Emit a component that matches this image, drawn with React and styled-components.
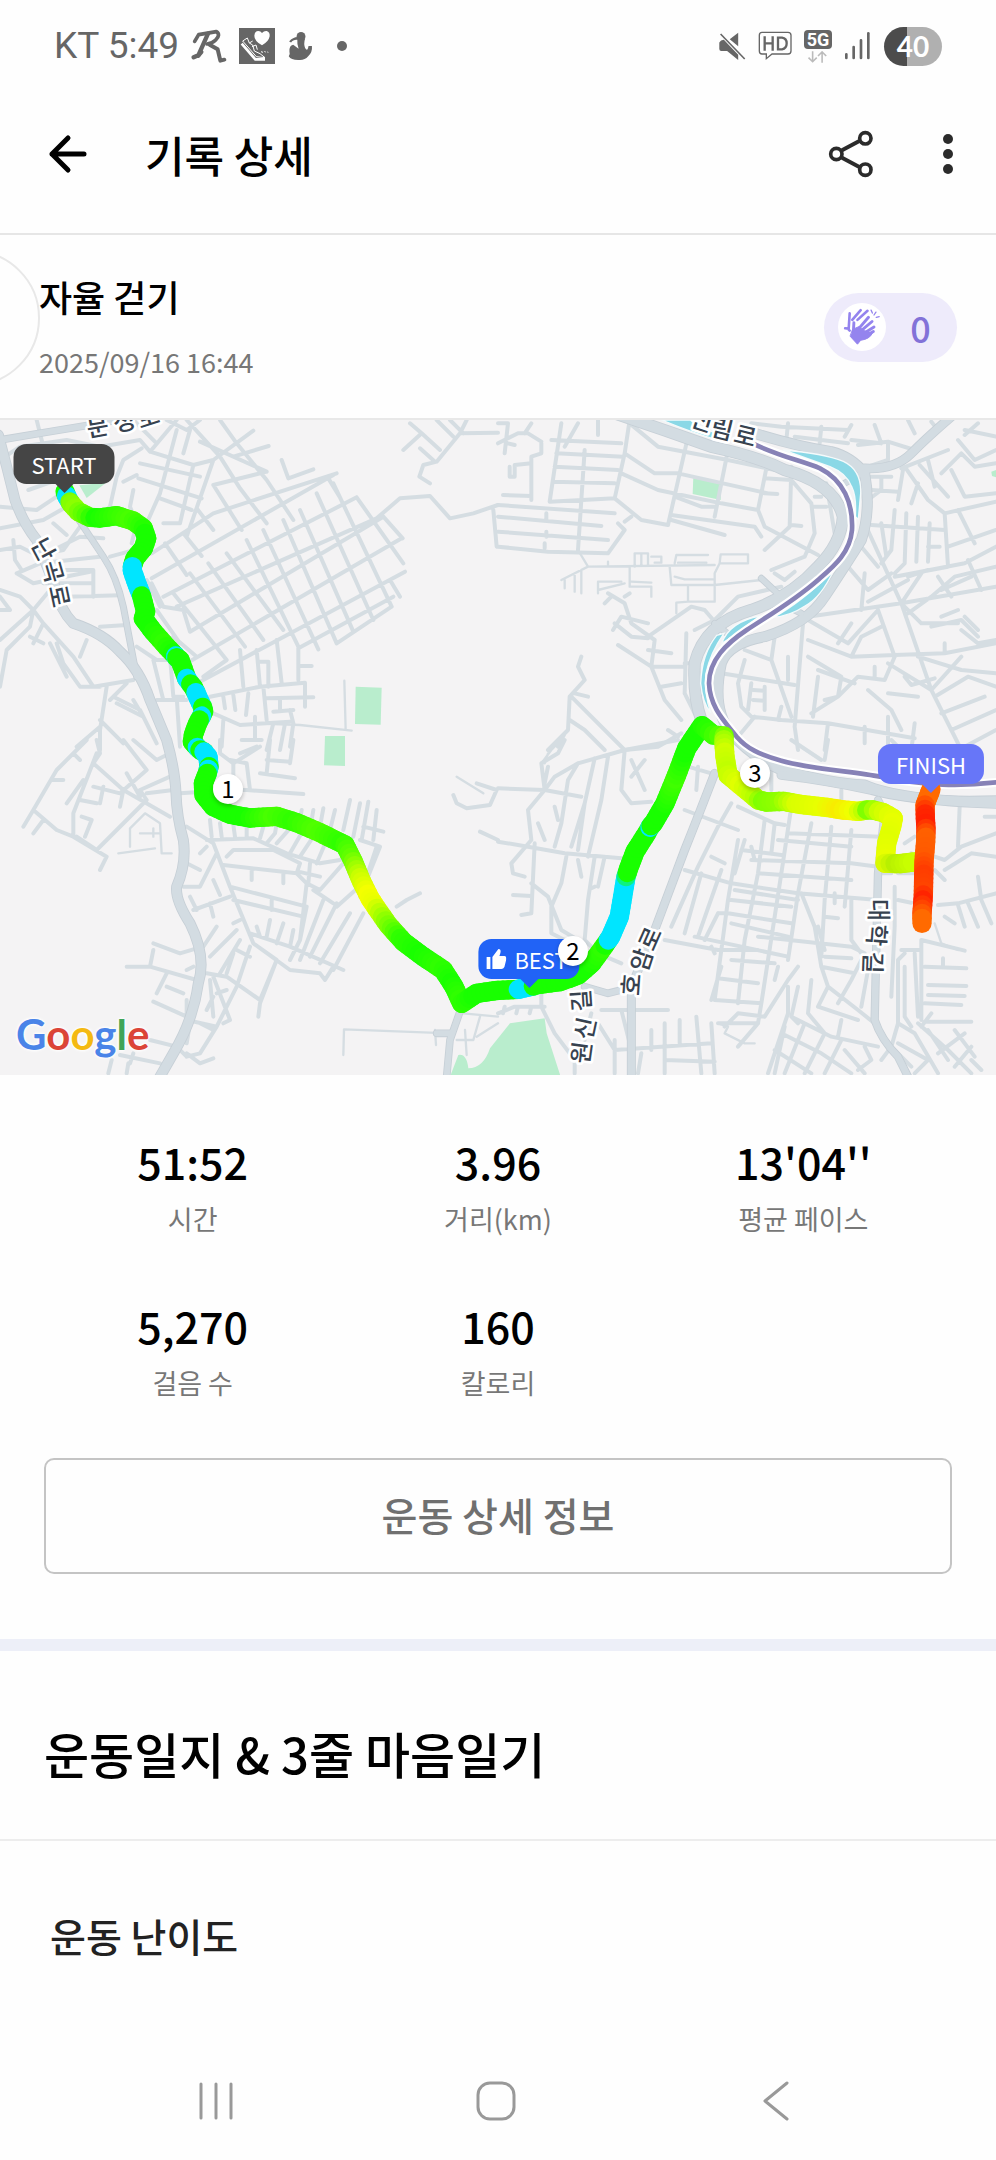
import React from "react"
import styled, { createGlobalStyle } from "styled-components"

/* ---------- map data (map units, 3 per pixel at full width) ---------- */

const MAP_W = 2988
const MAP_H = 1965

const minorRoads = [
  {
    x: 0,
    y: -30,
    d: `M110 30L130 110L185 170 M400 30L470 100 M500 30L560 60L600 30 M0 150L60 110L200 90L300 110L420 90L450 125L580 165L640 150L760 62
    M560 30L660 140L720 235L800 340 M660 30L710 100L800 210L880 330 M600 95L800 185 M420 160L600 200 M415 205L605 265 M450 125L530 30 M530 60L480 250L440 340
    M570 60L550 130 M580 165L540 340L490 340 M480 265L575 300 M640 150L560 380 M700 140L806 108 M640 225L800 185 M640 225L725 360 M590 295L640 360
    M425 115L370 150L350 200L330 290L280 340 M410 195L370 215 M400 240L390 290L410 340L395 400 M85 240L170 210 M0 290L110 300L170 260 M0 355L130 330L200 290
    M845 150L865 205L940 178 M455 430L640 310L1010 190 M455 505L1000 195 M490 560L1070 262 M530 590L1130 325 M570 665L1150 320 M560 760L1205 385
    M600 815L1215 485 M1010 700L1175 590 M895 715L1180 560
    M495 400L560 495 M550 370L605 438 M520 550L680 750 M455 520L490 590 M570 490L735 710 M625 460L790 690 M680 430L850 660 M740 390L895 710 M790 360L955 718
    M850 330L1010 700 M900 300L1060 665 M950 250L1120 630 M1000 220L1175 590 M1070 262L1210 460 M1150 320L1208 385 M985 205L1020 262 M1170 510L1200 560
    M490 590L550 600L570 665 M440 510L480 590 M470 600L540 700 M520 680L590 740 M1130 325L1200 265L1290 258L1350 325L1420 310L1494 285 M1480 300L1490 410
    M330 440L440 410 M0 420L60 410L120 440L240 380L310 385 M40 390L45 450L65 480 M160 340L200 375 M240 350L190 420L140 430 M50 490L120 460L300 440 M50 490L100 520L270 485
    M180 480L280 480L280 560 M130 520L280 520 M200 560L360 556 M0 540L60 560L100 600L0 690 M100 600L90 650L20 720L0 830 M150 540L100 600L130 640L220 740L280 830L400 810
    M300 650L380 645 M260 690L240 740 M90 680L130 700 M130 640L100 700 M170 700L190 760L240 830L300 830 M150 700L200 800 M410 710L470 750L530 750
    M460 750L490 870 M510 740L520 860L550 860 M470 870L560 870 M530 860L540 1010 M320 830L300 960L300 1020 M340 860L420 900L470 1000 M380 820L330 870 M350 880L430 920L400 870
    M300 930L370 1000 M230 1010L300 950 M680 750L610 800 M720 720L730 830 M770 720L780 830 M830 690L845 820 M895 715L895 810 M895 768L935 768 M780 755L805 755L805 830
    M630 860L780 830L915 818L915 890 M800 865L940 862 M670 860L675 895 M700 855L706 900 M745 850L738 915 M790 830L800 930 M820 905L880 900 M840 870L840 900
    M640 910L720 945L870 935 M670 930L665 1010 M765 920L765 990 M725 990L785 990 M820 940L800 1020 M855 940L840 1020 M880 940L870 1010 M870 900L880 940
    M1230 40L1265 70L1210 120 M1265 70L1320 120 M1310 30L1360 80 M1400 30L1380 70L1310 155L1270 165L1258 200L1290 220 M1350 30L1390 70 M1260 115L1305 155 M1380 70L1494 68
    M0 600L30 600 M0 560L30 600`,
  },
  {
    x: 1494,
    y: -30,
    d: `M0 40L30 40L20 130 M30 100L50 105 M130 100L130 130L100 140L100 270 M0 100L60 70L90 70L130 95 M190 40L155 275 M100 40L80 70 M35 170L35 200L50 200L50 165L100 160 M15 255L100 258
    M160 90L370 100 M175 130L375 140 M170 170L360 180 M165 215L350 220 M240 40L200 110 M300 30L300 75 M155 275L350 265 M0 285L350 310 M0 320L310 348 M0 365L330 390
    M0 410L150 425L330 430L380 360L360 340 M260 120L240 420 M350 265L380 130L395 30 M145 310L145 330 M145 365L145 380 M140 400L140 415
    M395 40L480 110L690 150L830 180 M380 130L470 190L540 190L810 250 M370 190L480 240L670 280L780 300 M350 265L430 330L510 345 M400 320L380 335
    M570 80L510 345 M690 120L650 320 M810 150L780 300L800 350 M530 260L610 290L650 290 M520 315L770 350L790 380 M520 330L680 375 M800 205L880 210L940 280L950 370L920 440L820 480
    M880 170L875 350L800 420 M800 250L838 252 M880 345L910 348 M800 350L960 435 M945 290L985 290 M950 260L970 260 M985 220L1010 370 M870 40L865 90 M970 50L965 100 M1060 90L1150 100
    M760 40L850 50L1050 60 M1060 45L1040 80 M1130 45L1150 100 M890 80L1050 100 M830 490L860 510L890 485 M880 525L890 550
    M1230 30L1250 70 M1300 35L1320 60 M1080 105L1170 95L1250 120 M1170 100L1170 150L1110 170 M1220 170L1290 270L1340 310L1350 470L1190 500 M1210 175L1350 120 M1265 165L1350 260 M1290 150L1310 230
    M1360 180L1400 260L1494 250 M1330 190L1390 130L1430 170L1494 160 M1380 90L1430 150L1494 120 M1400 60L1494 80 M1440 40L1400 75 M1340 310L1494 275 M1380 300L1430 400 M1350 410L1494 360
    M1120 200L1180 200 M1150 200L1150 240L1110 270 M1215 180L1200 270 M1120 240L1200 245 M1260 220L1240 280 M1120 345L1340 360 M1190 300L1180 420L1150 460 M1225 310L1220 460L1190 490 M1260 320L1255 455 M1295 340L1290 455 M1290 410L1325 410
    M1100 340L1210 580L1300 840L1390 1020 M1090 410L1140 470 M1050 470L1110 540L1180 490 M1150 340L1165 440 M1100 490L1090 600 M1110 575L1230 510 M930 620L1210 580L1494 530
    M1190 500L1400 460L1494 410 M1270 490L1210 580 M1320 500L1360 560 M1330 540L1420 500 M1410 450L1450 540 M1230 610L1300 560L1370 500L1494 470 M1140 600L1190 740 M1210 580L1270 640L1380 640 M1330 620L1380 600
    M930 630L1050 700L1140 600 M930 690L1060 740L1090 680L1150 650 M1020 700L1060 640 M930 740L1030 800L1020 860L940 910 M915 640L890 950 M960 800L945 920 M1060 740L1190 735L1340 730L1494 700
    M1190 740L1160 810L1080 800L1020 860L980 870 M1130 770L1130 800 M1260 740L1390 780L1494 790 M1340 700L1340 730 M1390 740L1300 840L1170 760 M1220 800L1240 825L1310 805 M1170 850L1260 860 M1110 840L1180 900L1210 960
    M1310 860L1410 800L1494 830 M1330 910L1460 860 M1360 960L1494 900 M1400 1010L1494 960 M1390 660L1440 700L1494 690 M1400 620L1440 660 M1300 650L1390 630L1440 680 M1230 500L1290 480
    M670 790L890 825 M740 720L820 750 M830 680L820 750L880 920 M740 750L720 820L730 890L760 920L850 930L990 940L1250 985 M760 820L750 900 M800 830L800 900 M765 840L800 842 M765 870L800 872 M850 890L840 930 M870 740L870 810
    M890 950L900 1020 M990 940L980 1020 M1100 950L1100 1000 M1170 920L1170 1010 M1250 940L1240 1020 M960 780L1070 820 M720 980L770 920
    M590 660L650 630L720 560L850 530 M450 680L580 590L620 600L680 670 M470 690L460 770L560 770 M450 720L520 730 M565 670L560 850 M360 705L460 770L500 870L550 930 M490 830L550 820 M560 850L590 910
    M330 550L380 580L400 640L470 690 M380 560L395 550 M320 580L340 560 M345 660L370 620L450 640 M350 640L400 680L450 685 M560 760L600 760 M510 960L540 980
    M250 740L240 770L260 810L215 860L210 960L150 1020 M230 850L270 860 M220 860L380 1020 M215 930L260 960L320 1020 M380 1020L480 1010L550 970 M200 970L180 1010`,
  },
  {
    x: 0,
    y: 960,
    d: `M290 0L300 40L280 70L370 150L510 230 M370 0L440 90 M400 0L470 60L510 40 M290 40L220 220L220 290 M260 0L170 90L100 210L70 260 M100 210L170 270L220 290L320 350L300 390 M220 40L240 60 M100 280L130 240 M160 120L190 120
    M280 140L360 160L440 90 M300 190L310 140 M240 180L290 190 M245 230L275 240L255 290 M370 150L360 200 M230 290L290 330L440 180L420 150L510 110 M380 100L420 170 M520 150L440 160 M540 160L610 155 M250 120L200 190
    M560 260L640 310L690 440L760 610L870 690L960 700L975 720L1000 680 M630 240L635 290 M660 250L665 290 M700 255L705 290 M740 260L740 290 M790 260L780 295 M620 300L760 295L860 340L960 370L1020 360 M830 250L825 280L800 310 M870 265L830 310 M910 270L870 340 M940 290L900 350 M980 300L950 370
    M600 340L620 320 M680 350L700 330L820 330L900 370L890 400L920 430 M650 340L600 440L550 440 M670 375L890 400 M755 385L755 420 M850 400L850 430 M930 370L925 430 M895 395L960 410 M690 440L920 500 M700 480L910 530 M815 480L815 510 M580 510L690 470 M640 420L660 465 M570 470L590 510
    M560 370L600 390 M610 620L650 560 M630 490L640 530 M630 650L710 570 M660 700L720 600 M750 580L870 620L1030 690 M780 590L770 560 M810 540L800 590 M850 550L830 610 M880 570L870 620 M720 540L700 550 M920 500L900 600L870 660 M940 450L1000 490 M970 480L900 660 M1010 490L930 650 M1050 520L960 670 M1090 520L1000 690
    M1030 370L960 450L920 430L900 600 M1100 420L1010 500 M1130 320L1080 470 M1050 180L1030 270 M1080 190L1060 290 M1105 185L1085 300 M1130 210L1120 300 M1090 260L1150 275 M1080 300L1140 320L1100 420 M1005 210L990 270 M970 205L960 260 M940 210L935 240 M905 210L900 240
    M690 60L740 70L750 150L730 150 M660 0L660 40L700 70L780 20 M780 100L885 115 M740 150L910 162 M810 0L800 100 M880 0L870 70 M800 60L870 65 M700 70L700 150 M720 40L770 20
    M1190 500L1220 480L1260 460 M460 610L540 640L590 625 M460 630L450 680 M380 680L450 680L590 720 M500 700L470 760 M500 740L550 760 M460 785L560 830L560 780 M450 900L530 920L560 950 M360 945L480 970 M335 960L325 1000 M385 970L380 1000 M400 940L390 970
    M620 700L680 710L780 780L830 660 M630 720L640 830 M640 710L690 840L670 850 M650 760L680 750 M640 770L620 810 M750 620L710 740L650 860L560 840 M760 610L830 660L780 790L775 830 M710 630L750 650 M700 640L680 700 M570 850L560 910 M650 860L600 940L560 950 M560 940L600 970L640 955 M600 850L640 870 M560 690L580 680
    M1360 165L1370 190L1400 205L1470 195L1490 150L1430 130 M1440 275L1494 300`,
  },
  {
    x: 1494,
    y: 960,
    d: `M0 145L140 150L170 110L240 70L380 30L540 0 M140 150L130 70L180 40L200 0 M140 150L250 170 M150 80L140 130 M380 30L370 150L400 190L460 185 M400 60L440 150 M440 60L400 110 M140 150L90 210L100 300L40 370L45 400L80 410 M0 305L90 320L200 340L370 355
    M240 70L210 120L190 250L170 320 M290 55L260 190L240 330 M330 50L310 180L270 350 M260 190L220 320 M120 250L140 300 M170 200L180 240 M205 350L190 430L160 500L160 580L200 600 M240 360L250 410 M290 350L270 480L260 600L300 640 M320 350L300 440
    M110 310L100 520L70 525 M45 465L100 468 M100 430L150 470L190 570L240 600 M300 640L370 670 M290 440L280 445
    M0 820L50 800L140 800 M130 740L130 800L170 880L230 960 M20 800L15 820 M60 800L55 820 M100 800L95 820 M560 210L720 270 M600 80L595 150 M570 80L640 100 M700 190L660 260L600 380L520 560 M720 200L830 250L860 255
    M640 350L680 370 M720 300L690 480L650 780L790 790L780 850 M800 240L780 400L740 600L720 790 M560 390L700 430 M670 390L600 590 M610 400L560 580 M740 300L710 400 M880 200L850 400L790 790 M940 250L900 460L870 660
    M1000 260L980 480L970 650 M1060 270L1040 500 M870 280L1150 290 M840 300L1060 320 M730 330L850 345 M760 360L1060 370L1140 380 M780 400L1060 420 M700 430L900 460L1140 480 M830 250L820 340 M760 320L770 360 M710 450L900 480 M700 480L880 500 M690 520L880 550 M700 550L870 590
    M660 520L690 520 M660 520L620 600 M590 590L870 650 M500 600L660 630L780 630 M640 620L650 640 M780 590L1060 620L1100 640 M700 660L830 670 M670 680L640 780 M660 715L780 730 M910 460L950 560L970 680L990 740L960 800 M970 680L1070 700 M980 650L1060 655 M980 630L960 560
    M1010 460L1010 490 M980 530L1020 535 M1060 480L1060 600L1090 640 M840 680L830 720 M900 680L870 720L800 830L720 820L680 860 M870 740L870 820L810 1000 M900 740L880 830L900 850 M940 720L930 820L980 880 M990 740L1080 810L1130 850 M1100 640L1060 720L1020 790 M1110 690L1090 800 M960 800L1080 840
    M880 830L1000 890L1140 920 M850 880L970 940L1060 1000 M830 930L940 1000 M920 850L860 1000 M980 880L920 1000 M1030 900L980 1000 M860 860L830 1000 M1100 920L1120 960L1080 990 M1030 840L1020 890
    M1190 440L1190 560L1180 770 M1220 640L1200 660L1200 850L1250 880L1320 1000 M1210 630L1270 630 M1220 680L1220 830L1240 860 M1250 640L1260 830 M1270 600L1400 632 M1280 680L1405 685 M1335 655L1335 680 M1290 735L1405 738 M1290 765L1400 768 M1280 790L1390 795
    M1280 845L1420 845 M1260 850L1350 930L1420 1000 M1300 820L1270 860 M1320 940L1400 880 M1200 910L1290 960L1250 1000 M1200 850L1180 920L1150 960 M1290 870L1350 960 M1370 870L1430 950 M1420 920L1370 980 M1180 920L1240 980 M1420 960L1450 990
    M1200 400L1250 400L1240 340 M1310 350L1340 360L1390 320L1494 280 M1385 200L1380 320 M1340 390L1420 340L1494 350 M1320 495L1380 490L1494 460 M1380 495L1400 560 M1340 530L1370 550 M1440 410L1450 480L1480 550 M1410 490L1440 560 M1140 400L1180 400 M1310 390L1340 420 M1200 480L1240 488
    M1220 310L1250 290 M1460 230L1494 230 M1270 600L1270 840 M1030 150L1030 200 M820 90L820 150 M990 0L980 60 M880 0L970 60 M1180 0L1200 20 M350 930L640 910 M430 940L420 1000 M500 850L500 1000 M545 840L545 910 M595 830L610 1000 M640 850L650 1000 M460 870L460 930 M500 960L650 965
    M310 810L510 810 M280 820L260 900 M350 900L350 1000 M230 960L230 1000 M300 850L350 930 M370 810L400 930 M780 850L720 920 M660 850L780 850 M1040 930L1100 1000`,
  },
]

const thinRoads = [
  { x: 0, y: -30, d: "M1033 812L1037 960 M900 945L1055 962 M760 940L900 945" },
  {
    x: 1494,
    y: -30,
    d: `M240 420L270 470L650 465 M190 510L270 470 M200 510L200 535 M230 490L230 545 M250 480L250 550 M300 550L300 515L370 515 M395 470L395 530L460 530L460 560 M400 515L460 518
    M410 470L410 430L450 430L450 465 M430 430L430 465 M460 440L490 440L490 458L470 458 M530 460L535 435L630 435 M540 458L625 458 M665 458L668 433L750 433L750 460L668 460 M515 470L520 525L650 525L650 490L665 460
    M530 500L560 508L645 508 M570 530L570 575L650 575L650 530 M535 610L535 578L570 575 M650 525L790 510 M300 540L380 520 M330 465L330 455`,
  },
  { x: 0, y: 960, d: "M1030 945L1032 868L1350 880 M1305 870L1308 915 M355 340L465 325 M390 320L390 265L435 220L480 250L485 340L515 340 M420 280L480 280 M460 265L460 290 M1370 110L1450 160 M1390 820L1494 830 M1440 830L1420 900L1370 900 M1395 870L1400 945 M1494 850L1430 890" },
  { x: 1494, y: 960, d: "M130 70L160 30L190 0 M140 70L150 40 M410 810L510 810 M660 850L690 860L680 880L740 910L770 910 M1310 550L1330 610L1380 630" },
]

const arterials = [
  { x: 0, y: -30, w: 20, d: "M0 90L120 70L270 45L400 22" },
  { x: 0, y: -30, w: 30, d: "M-5 75L20 170L45 270Q70 340 110 390L165 530Q180 600 220 640Q310 670 360 725Q420 780 450 870L500 990Q525 1080 528 1150Q530 1220 550 1290Q560 1360 530 1430Q525 1470 570 1540Q620 1640 595 1720Q580 1830 520 1930L480 2000" },
  { x: 0, y: -30, w: 18, d: "M230 320L310 440Q350 500 370 590L410 800" },
  { x: 1494, y: -30, w: 34, d: "M350 10Q500 60 640 110Q780 140 860 180Q1010 220 1035 320Q1030 400 960 470Q880 560 760 600Q620 640 590 760Q585 860 610 930" },
  { x: 1494, y: -30, w: 30, d: "M770 70Q900 110 1000 125Q1060 140 1100 190Q1120 300 1090 390Q1040 470 980 560Q930 640 800 680Q690 700 670 760Q640 900 700 970Q760 1040 850 1080Q1000 1120 1100 1125Q1200 1170 1494 1180" },
  { x: 1494, y: -30, w: 26, d: "M1100 175Q1190 180 1240 130Q1290 80 1360 20" },
  { x: 1494, y: 960, w: 26, d: "M850 105Q980 120 1120 150Q1260 190 1510 180" },
  { x: 1494, y: 960, w: 24, d: "M650 100Q600 230 560 330L470 570L400 740L400 1010" },
  { x: 1494, y: 960, w: 22, d: "M1140 180L1160 220L1140 400L1130 840Q1150 900 1200 950L1230 1010" },
  { x: 1494, y: 960, w: 20, d: "M260 740L330 760L390 745" },
  { x: 0, y: 960, w: 20, d: "M1385 800L1350 900L1340 1010 M1310 880L1350 880" },
  { x: 1494, y: -30, w: 18, d: "M790 505L860 570 M650 640L700 680 M870 590L910 610 M1040 220L1110 180" },
]

const parks = [
  "M1067 800L1145 803L1142 914L1065 912Z",
  "M975 948L1035 948L1035 1038L972 1036Z",
  "M238 196L318 188L260 234Z",
  "M2080 170L2164 186L2162 240L2078 222Z",
  "M2988 150L2974 155L2976 168L2988 172Z",
  "M1350 1970L1375 1905Q1400 1900 1405 1945Q1450 1945 1470 1885L1530 1810L1634 1795L1640 1840L1682 1970Z",
]

const waters = [
  "M1985 0L2070 0Q2120 30 2180 55L2160 62Q2080 40 1985 0Z",
  "M2350 90Q2470 100 2530 124Q2585 150 2582 220L2575 298L2566 290Q2570 230 2555 200Q2540 160 2490 140Q2420 115 2350 90Z",
  "M2500 452Q2465 530 2415 558Q2370 588 2320 592Q2400 550 2500 452Z",
  "M2165 670Q2190 604 2280 588Q2230 625 2185 658Z",
  "M2172 640Q2130 700 2118 760Q2112 820 2132 878Q2108 850 2102 790Q2106 700 2150 646Z",
]

const rail =
  "M2240 62C2330 108 2400 120 2460 145C2530 180 2560 250 2556 330C2550 400 2500 440 2454 480C2380 545 2300 590 2240 630C2180 670 2127 720 2127 790C2130 860 2170 900 2210 950C2240 985 2280 1005 2344 1022C2420 1045 2560 1055 2640 1070C2780 1098 2880 1100 3000 1086"

const G = "#19ff00"
const C = "#00e5ff"
const Y = "#e8ff00"

const walk = [
  [195, 215, G], [200, 228, G], [203, 234, C], [210, 246, C], [214, 252, "#7dfc00"], [235, 275, "#8cff00"], [270, 292, "#50ff00"], [300, 294, G], [350, 287, "#30ff00"],
  [400, 303, "#48ff00"], [430, 325, "#30ff00"], [440, 355, G], [430, 385, G], [405, 415, G], [397, 440, G], [397, 452, C], [412, 495, C], [425, 528, C], [430, 548, G], [437, 575, G], [430, 595, G],
  [460, 635, G], [500, 680, "#30ff00"], [527, 708, G], [530, 713, C], [540, 720, G], [560, 775, G], [572, 792, C], [580, 802, G], [588, 818, G], [594, 832, C], [608, 862, C], [611, 874, G], [605, 888, G], [598, 900, C],
  [592, 912, G], [580, 945, G], [577, 965, G], [592, 982, G], [600, 990, C], [612, 996, G], [624, 1010, C], [627, 1040, C], [625, 1048, G], [622, 1060, C], [618, 1070, G], [610, 1090, G],
  [612, 1125, G], [640, 1160, G], [690, 1183, G], [750, 1194, G], [830, 1189, "#48ff00"], [890, 1208, "#30ff00"], [960, 1238, "#50ff00"], [1035, 1275, "#30ff00"], [1060, 1325, "#60ff00"],
  [1085, 1385, "#c8ff00"], [1110, 1435, "#f4ff00"], [1130, 1465, Y], [1165, 1515, "#90ff00"], [1210, 1565, "#30ff00"], [1270, 1610, G], [1330, 1650, "#30ff00"], [1362, 1700, G], [1385, 1750, "#30ff00"],
  [1430, 1720, G], [1494, 1711, G], [1555, 1708, G], [1562, 1706, C], [1600, 1698, C], [1610, 1694, G], [1680, 1685, G], [1735, 1665, G], [1775, 1630, G], [1815, 1575, "#30ff00"],
  [1825, 1560, G], [1832, 1550, C], [1858, 1490, C], [1868, 1430, C], [1878, 1370, C], [1886, 1345, G], [1905, 1295, G], [1940, 1240, G], [1950, 1222, G], [1953, 1217, C], [1960, 1210, G], [1995, 1150, G], [2030, 1065, "#40ff00"],
  [2060, 985, G], [2106, 917, G], [2140, 945, "#30ff00"], [2172, 948, "#50ff00"], [2172, 970, "#a0ff00"], [2175, 1010, "#d0ff00"],
  [2184, 1065, "#c0ff00"], [2230, 1103, "#e0ff00"], [2275, 1140, "#b8ff00"], [2300, 1146, "#80ff00"], [2350, 1144, "#90ff00"], [2400, 1153, "#d8ff00"], [2480, 1162, Y], [2530, 1170, "#f8ec00"], [2575, 1174, "#f0ff00"],
  [2600, 1170, "#c0ff00"], [2620, 1170, "#80ff00"], [2650, 1178, "#c8ff00"], [2680, 1195, "#e0ff00"], [2675, 1220, "#e8ff00"], [2660, 1270, "#e0ff00"], [2655, 1330, "#e8ff00"], [2700, 1331, "#b8f000"], [2750, 1325, "#c8ff00"],
]

const sprint = [
  [2793, 1108, "#ff6a00"], [2775, 1155, "#ff6a00"], [2776, 1195, "#ff2800"], [2778, 1225, "#ff2000"], [2777, 1265, "#ff6000"], [2772, 1325, "#ff5a00"], [2771, 1375, "#ff3c00"],
  [2770, 1425, "#ff4400"], [2768, 1455, "#ff2400"], [2766, 1480, "#ff4400"], [2766, 1510, "#ff6a00"],
]

const labels = [
  { t: "문", x: 293, y: 20, r: -10 }, { t: "성", x: 372, y: 4, r: -14 }, { t: "로", x: 444, y: -8, r: -18 },
  { t: "난", x: 130, y: 388, r: 62 }, { t: "곡", x: 158, y: 455, r: 74 }, { t: "로", x: 178, y: 528, r: 78 },
  { t: "신", x: 2106, y: 2, r: 18 }, { t: "림", x: 2166, y: 28, r: 14 }, { t: "로", x: 2236, y: 48, r: 14 },
  { t: "호", x: 1894, y: 1694, r: -86 }, { t: "암", x: 1925, y: 1620, r: -72 }, { t: "로", x: 1950, y: 1556, r: -66 },
  { t: "대", x: 2636, y: 1470, r: 90 }, { t: "학", x: 2630, y: 1545, r: 94 }, { t: "길", x: 2618, y: 1628, r: 92 },
  { t: "원", x: 1744, y: 1898, r: -82 }, { t: "신", x: 1756, y: 1825, r: -78 }, { t: "길", x: 1744, y: 1742, r: -94 },
]

const stats = [
  { value: "51:52", label: "시간" },
  { value: "3.96", label: "거리(km)" },
  { value: "13'04''", label: "평균 페이스" },
  { value: "5,270", label: "걸음 수" },
  { value: "160", label: "칼로리" },
]

/* ---------- route ---------- */

const toRgb = (c) => [1, 3, 5].map((i) => parseInt(c.slice(i, i + 2), 16))

// splits each leg into short pieces so the pace colour blends along the line
const pieces = (points) =>
  points.slice(1).flatMap(([x2, y2, c2], i) => {
    const [x1, y1, c1] = points[i]
    const from = toRgb(c1)
    const to = toRgb(c2)
    const n = Math.max(1, Math.round(Math.hypot(x2 - x1, y2 - y1) / 14))
    return Array.from({ length: n }, (_, k) => {
      const at = (a, b, f) => a + (b - a) * f
      const mix = from.map((v, j) => Math.round(at(v, to[j], (k + 1) / n)))
      return {
        d: `M${at(x1, x2, k / n)} ${at(y1, y2, k / n)}L${at(x1, x2, (k + 1) / n)} ${at(y1, y2, (k + 1) / n)}`,
        stroke: `rgb(${mix.join(",")})`,
      }
    })
  })

const Route = ({ points }) => (
  <g fill="none" strokeWidth="58" strokeLinecap="round">
    {pieces(points).map((p, i) => (
      <path key={i} d={p.d} stroke={p.stroke} />
    ))}
  </g>
)

const RoadMap = () => (
  <MapSvg viewBox={`0 0 ${MAP_W} ${MAP_H}`} aria-hidden="true">
    {parks.map((d) => (
      <path key={d} d={d} fill="#b9edcd" />
    ))}
    <g fill="none" stroke="#d5dde2" strokeLinecap="round" strokeLinejoin="round">
      {thinRoads.map((r, i) => (
        <path key={i} d={r.d} transform={`translate(${r.x} ${r.y})`} strokeWidth="7" />
      ))}
      {minorRoads.map((r, i) => (
        <path key={i} d={r.d} transform={`translate(${r.x} ${r.y})`} strokeWidth="12" />
      ))}
      {arterials.map((r, i) => (
        <path key={i} d={r.d} transform={`translate(${r.x} ${r.y})`} stroke="#c6cfd6" strokeWidth={r.w + 3} />
      ))}
      {arterials.map((r, i) => (
        <path key={i} d={r.d} transform={`translate(${r.x} ${r.y})`} stroke="#d3dce2" strokeWidth={r.w - 2} />
      ))}
    </g>
    {waters.map((d) => (
      <path key={d} d={d} fill="#8ad8e6" stroke="#f4fafb" strokeWidth="4" />
    ))}
    <path d={rail} fill="none" stroke="#fff" strokeWidth="27" />
    <path d={rail} fill="none" stroke="#8782b6" strokeWidth="14" />
    <Route points={walk} />
    <Route points={sprint} />
    {labels.map((l, i) => (
      <RoadName key={i} transform={`translate(${l.x} ${l.y}) rotate(${l.r})`} dy="26">
        {l.t}
      </RoadName>
    ))}
  </MapSvg>
)

/* ---------- icons ---------- */

const RunnerIcon = () => (
  <svg width="36" height="38" viewBox="580 85 108 114" fill="none" stroke="#666" strokeLinecap="round" strokeLinejoin="round">
    <path d="M591 128L603 108Q630 104 656 99Q670 108 654 124Q644 134 628 136" strokeWidth="11" />
    <path d="M631 105L610 152L602 170L588 176" strokeWidth="13" />
    <path d="M636 138L660 152L668 186L680 183" strokeWidth="12" />
    <path d="M612 160L602 172" strokeWidth="11" />
  </svg>
)

const ShoeIcon = () => (
  <svg width="36" height="36" viewBox="711 89 108 108">
    <path d="M711 89H819V197H711Z" fill="#666" />
    <path d="M780 141Q757 128 757 112Q758 98 769 98Q776 98 780 104Q786 97 794 98Q804 101 803 114Q800 130 780 141Z" fill="#fff" />
    <path d="M719 136L760 183H789" fill="none" stroke="#fff" strokeWidth="8" />
    <path d="M722 128L736 119L742 134L752 140L757 158L774 166L789 178L763 175Z" fill="none" stroke="#fff" strokeWidth="3" />
    <path d="M742 134L752 128 M750 145L762 140L766 154 M779 158L781 164 M788 158L790 162 M797 160L798 163" fill="none" stroke="#fff" strokeWidth="3" />
  </svg>
)

const SquirrelIcon = () => (
  <svg width="26" height="30" viewBox="856 98 76 88" fill="#666">
    <circle cx="897" cy="114" r="13" />
    <path d="M862 129Q874 114 892 116L888 124Q874 122 868 132Z" />
    <path d="M886 120H909Q904 136 909 148Q916 160 919 142L929 142Q931 160 918 172Q908 184 892 183Q868 184 861 172Q866 168 863 158Q862 140 874 138L890 150Q885 136 886 120Z" />
  </svg>
)

const MuteIcon = () => (
  <svg width="28" height="30" viewBox="664 94 86 90" fill="#666">
    <path d="M700 118L726 98V140Z" />
    <path d="M668 128Q672 120 682 120L726 166V182L692 154H674Q668 154 668 148Z" />
    <path d="M672 102L746 179" stroke="#666" strokeWidth="5" />
  </svg>
)

const HdIcon = () => (
  <svg width="34" height="30" viewBox="788 97 102 90" fill="none" stroke="#666">
    <path d="M800 101H878Q887 101 887 110V157Q887 166 878 166H830L813 180V166H800Q792 166 792 157V110Q792 101 800 101Z" strokeWidth="4" />
    <path d="M808 113V156 M832 113V156 M808 134H832" strokeWidth="7" />
    <path d="M848 117H860Q874 119 874 134Q874 150 860 152H848Z" strokeWidth="7" />
  </svg>
)

const SignalIcon = () => (
  <svg width="28" height="30" viewBox="1036 96 84 90" stroke="#666" strokeWidth="8" strokeLinecap="round">
    <path d="M1043 166V177 M1065 144V177 M1087 124V177" />
    <path d="M1109 103V177" />
  </svg>
)

const DataArrows = () => (
  <svg width="22" height="12" viewBox="928 147 66 38" fill="none" stroke="#bbb" strokeWidth="5">
    <path d="M944 148V181 M931 168L944 181L957 168" />
    <path d="M974 184V151 M961 163L974 150L987 163" />
  </svg>
)

const BackArrow = () => (
  <svg width="42" height="42" viewBox="0 0 42 42" fill="none" stroke="#000" strokeWidth="5" strokeLinecap="round" strokeLinejoin="round">
    <path d="M37 21H5 M21 5L5 21L21 37" />
  </svg>
)

const ShareIcon = () => (
  <svg width="46" height="48" viewBox="990 389 138 144" fill="none" stroke="#2b2b2b" strokeWidth="11">
    <path d="M1032 450L1084 422 M1032 472L1084 500" strokeWidth="12" />
    <circle cx="1015" cy="461" r="17" />
    <circle cx="1102" cy="414" r="17" />
    <circle cx="1102" cy="508" r="17" />
  </svg>
)

const MoreIcon = () => (
  <svg width="12" height="42" viewBox="0 0 12 42" fill="#2b2b2b">
    <circle cx="6" cy="6" r="5" />
    <circle cx="6" cy="21" r="5" />
    <circle cx="6" cy="36" r="5" />
  </svg>
)

const ClapIcon = () => (
  <svg width="48" height="48" viewBox="1020 905 148 148" fill="none" stroke="#9484ee" strokeLinecap="round" strokeLinejoin="round">
    <path d="M1056 937L1053 984L1042 983 M1064 957L1090 927 M1080 957L1111 929 M1050 984L1056 990" strokeWidth="8" />
    <path d="M1069 966L1067 1000 M1084 984L1114 949 M1090 992L1125 962 M1094 1002L1131 979 M1098 1010L1129 993" strokeWidth="9" />
    <path d="M1066 986L1084 978L1100 990L1126 998Q1118 1016 1090 1020L1080 1032L1058 1008Z" fill="#9484ee" strokeWidth="3" />
    <path d="M1122 927L1126 936 M1137 933L1131 942 M1147 947L1138 949" strokeWidth="4" />
  </svg>
)

const ThumbIcon = () => (
  <svg width="20" height="22" viewBox="0 0 20 22" fill="#fff">
    <path d="M0 9H4V21H0Z M6 9L12 1Q15 1 14 5L13 8H18Q20 8 20 11L18 19Q17 21 15 21H6Z" />
  </svg>
)

const RecentsIcon = () => (
  <svg width="36" height="38" viewBox="0 0 36 38" fill="none" stroke="#999" strokeWidth="3" strokeLinecap="round">
    <path d="M3 2V36 M18 2V36 M33 2V36" />
  </svg>
)

const HomeIcon = () => (
  <svg width="40" height="40" viewBox="0 0 40 40" fill="none" stroke="#999" strokeWidth="3">
    <rect x="2" y="2" width="36" height="36" rx="12" />
  </svg>
)

const NavBackIcon = () => (
  <svg width="28" height="40" viewBox="0 0 28 40" fill="none" stroke="#999" strokeWidth="3" strokeLinecap="round" strokeLinejoin="round">
    <path d="M25 2L3 20L25 38" />
  </svg>
)

/* ---------- page ---------- */

const App = () => {
  return (
    <Page>
      <GlobalStyle />
      <StatusBar>
        <StatusGroup>
          <Clock>KT 5:49</Clock>
          <RunnerIcon />
          <ShoeIcon />
          <SquirrelIcon />
          <Dot />
        </StatusGroup>
        <StatusGroup>
          <MuteIcon />
          <HdIcon />
          <Network>
            <NetworkTag>5G</NetworkTag>
            <DataArrows />
          </Network>
          <SignalIcon />
          <Battery>40</Battery>
        </StatusGroup>
      </StatusBar>

      <AppBar>
        <IconButton aria-label="뒤로">
          <BackArrow />
        </IconButton>
        <Title>기록 상세</Title>
        <IconButton aria-label="공유">
          <ShareIcon />
        </IconButton>
        <IconButton aria-label="더보기">
          <MoreIcon />
        </IconButton>
      </AppBar>

      <Main>
        <Summary>
          <EdgeHandle />
          <SummaryText>
            <Activity>자율 걷기</Activity>
            <Time>2025/09/16 16:44</Time>
          </SummaryText>
          <ClapButton aria-label="박수 0">
            <ClapCircle>
              <ClapIcon />
            </ClapCircle>
            <ClapCount>0</ClapCount>
          </ClapButton>
        </Summary>

        <MapBox>
          <RoadMap />
          <Pin $x={64} $y={72} $color="#454545">
            START
          </Pin>
          <Pin $x={529} $y={567} $color="#2163f6">
            <ThumbIcon />
            BEST
          </Pin>
          <Pin $x={931} $y={372} $color="#6776f8">
            FINISH
          </Pin>
          <KmMark $x={228} $y={369}>1</KmMark>
          <KmMark $x={573} $y={531}>2</KmMark>
          <KmMark $x={755} $y={353}>3</KmMark>
          <MapLogo>
            <Letter $color="#4a84e8">G</Letter>
            <Letter $color="#db4437">o</Letter>
            <Letter $color="#f4b912">o</Letter>
            <Letter $color="#4a84e8">g</Letter>
            <Letter $color="#3fa457">l</Letter>
            <Letter $color="#db4437">e</Letter>
          </MapLogo>
        </MapBox>

        <Stats>
          {stats.map((s) => (
            <Stat key={s.label}>
              <StatLabel>{s.label}</StatLabel>
              <StatValue>{s.value}</StatValue>
            </Stat>
          ))}
        </Stats>
        <DetailButton>운동 상세 정보</DetailButton>

        <Diary>
          <DiaryTitle>운동일지 &amp; 3줄 마음일기</DiaryTitle>
          <Difficulty>운동 난이도</Difficulty>
        </Diary>
      </Main>

      <NavBar>
        <NavButton aria-label="최근 앱">
          <RecentsIcon />
        </NavButton>
        <NavButton aria-label="홈">
          <HomeIcon />
        </NavButton>
        <NavButton aria-label="이전">
          <NavBackIcon />
        </NavButton>
      </NavBar>
    </Page>
  )
}

const GlobalStyle = createGlobalStyle`
  * {
    box-sizing: border-box;
  }
  body {
    margin: 0;
    background: #fefefe;
    color: #000;
    font-family: "Noto Sans CJK KR", sans-serif;
  }
  h1, h2, h3, p, dl, dd {
    margin: 0;
  }
  button {
    border: none;
    padding: 0;
    background: none;
    font-family: inherit;
    cursor: pointer;
  }
  svg {
    display: block;
    flex: none;
  }
`
const Page = styled.div`
  display: flex;
  flex-direction: column;
  min-height: 100vh;
`
const StatusBar = styled.div`
  display: flex;
  justify-content: space-between;
  align-items: center;
  height: 78px;
  padding: 14px 54px 0;
`
const StatusGroup = styled.div`
  display: flex;
  align-items: center;
  gap: 12px;
`
const Clock = styled.span`
  font-family: Roboto, sans-serif;
  font-size: 37px;
  line-height: 40px;
  color: #666;
`
const Dot = styled.span`
  width: 10px;
  height: 10px;
  margin-left: 12px;
  border-radius: 50%;
  background: #666;
`
const Network = styled.span`
  display: flex;
  flex-direction: column;
  align-items: center;
  gap: 2px;
`
const NetworkTag = styled.span`
  width: 28px;
  border-radius: 4px;
  background: #666;
  color: #fff;
  font-family: Roboto, sans-serif;
  font-size: 18px;
  font-weight: 700;
  line-height: 19px;
  text-align: center;
`
const Battery = styled.span`
  width: 58px;
  height: 39px;
  border-radius: 20px;
  background: linear-gradient(90deg, #4c4c4c 40%, #b0b0b0 40%);
  color: #fff;
  font-family: Lato, sans-serif;
  font-size: 28px;
  font-weight: 700;
  line-height: 38px;
  text-align: center;
`
const AppBar = styled.header`
  display: flex;
  align-items: center;
  height: 157px;
  padding: 0 42px 3px 47px;
  border-bottom: 2px solid #e6e6e6;
`
const IconButton = styled.button`
  & + & {
    margin-left: 68px;
  }
`
const Title = styled.h1`
  flex: 1;
  margin-left: 56px;
  font-size: 43px;
  font-weight: 500;
  line-height: 60px;
`
const Main = styled.main`
  display: flex;
  flex-direction: column;
`
const Summary = styled.section`
  position: relative;
  display: flex;
  justify-content: space-between;
  align-items: center;
  padding: 39px 39px 38px;
  border-bottom: 2px solid #e8e8e8;
  overflow: hidden;
`
const EdgeHandle = styled.div`
  position: absolute;
  left: -96px;
  top: 15px;
  width: 136px;
  height: 136px;
  border: 2px solid #e8e8e8;
  border-radius: 50%;
`
const SummaryText = styled.div`
  display: flex;
  flex-direction: column;
  gap: 26px;
`
const Activity = styled.h2`
  font-size: 36px;
  font-weight: 500;
  line-height: 44px;
`
const Time = styled.p`
  color: #777;
  font-size: 27px;
  line-height: 36px;
`
const ClapButton = styled.button`
  display: flex;
  align-items: center;
  width: 133px;
  height: 69px;
  padding: 0 14px;
  border-radius: 35px;
  background: #eeebfb;
`
const ClapCircle = styled.span`
  border-radius: 50%;
  background: #fff;
`
const ClapCount = styled.span`
  flex: 1;
  padding-left: 12px;
  color: #8272d8;
  font-size: 36px;
  font-weight: 500;
  line-height: 36px;
  text-align: center;
`
const MapBox = styled.div`
  position: relative;
  background: #f4f3f4;
  overflow: hidden;
`
const MapSvg = styled.svg`
  width: 100%;
  height: auto;
`
const RoadName = styled.text`
  fill: #37424f;
  stroke: #fff;
  stroke-width: 16px;
  stroke-linejoin: round;
  paint-order: stroke;
  font-size: 72px;
  font-weight: 500;
  text-anchor: middle;
`
const onMap = ({ $x, $y }) => `
  position: absolute;
  left: ${($x / 996) * 100}%;
  top: ${($y / 655) * 100}%;
`
/* the tip of the pin sits on its point */
const Pin = styled.div`
  ${onMap}
  display: flex;
  align-items: center;
  gap: 8px;
  height: 40px;
  padding: 0 18px;
  border-radius: 13px;
  background: ${(p) => p.$color};
  color: #fff;
  font-size: 22px;
  line-height: 40px;
  transform: translate(-50%, -48px);
  &:has(svg) {
    padding: 0 12px 0 8px;
  }
  &::after {
    content: "";
    position: absolute;
    left: 50%;
    top: 100%;
    margin: -1px 0 0 -10px;
    border: 10px solid transparent;
    border-bottom: none;
    border-top-color: ${(p) => p.$color};
  }
`
const KmMark = styled.div`
  ${onMap}
  width: 30px;
  height: 30px;
  border-radius: 50%;
  background: #fff;
  box-shadow: 0 2px 4px rgba(0, 0, 0, 0.25);
  font-size: 24px;
  line-height: 28px;
  text-align: center;
  transform: translate(-50%, -50%);
`
const MapLogo = styled.div`
  position: absolute;
  left: 16px;
  bottom: 15px;
  font-family: Lato, sans-serif;
  font-size: 42px;
  font-weight: 700;
  line-height: 52px;
  text-shadow: 0 0 3px #fff, 0 0 3px #fff, 0 0 4px #fff;
`
const Letter = styled.span`
  color: ${(p) => p.$color};
`
const Stats = styled.dl`
  display: grid;
  grid-template-columns: repeat(3, 1fr);
  row-gap: 60px;
  padding: 58px 40px 57px;
`
const Stat = styled.div`
  display: flex;
  flex-direction: column-reverse;
  align-items: center;
  gap: 12px;
`
const StatValue = styled.dd`
  font-size: 43px;
  font-weight: 500;
  line-height: 56px;
`
const StatLabel = styled.dt`
  color: #777;
  font-size: 27px;
  line-height: 36px;
`
const DetailButton = styled.button`
  height: 116px;
  margin: 0 44px 65px;
  && {
    border: 2px solid #c4c4c4;
    padding-bottom: 4px;
  }
  border-radius: 10px;
  color: #707070;
  font-size: 39px;
  font-weight: 500;
`
const Diary = styled.section`
  border-top: 12px solid #edeff8;
`
const DiaryTitle = styled.h2`
  padding: 70px 44px 54px;
  border-bottom: 2px solid #ededed;
  font-size: 49px;
  font-weight: 500;
  line-height: 64px;
`
const Difficulty = styled.h3`
  padding: 68px 50px;
  color: #222;
  font-size: 39px;
  font-weight: 500;
  line-height: 52px;
`
const NavBar = styled.nav`
  display: grid;
  grid-template-columns: repeat(3, 1fr);
  align-items: center;
  height: 118px;
  margin-top: auto;
  padding: 0 80px 0 76px;
`
const NavButton = styled.button`
  display: flex;
  justify-content: center;
`
export default App
